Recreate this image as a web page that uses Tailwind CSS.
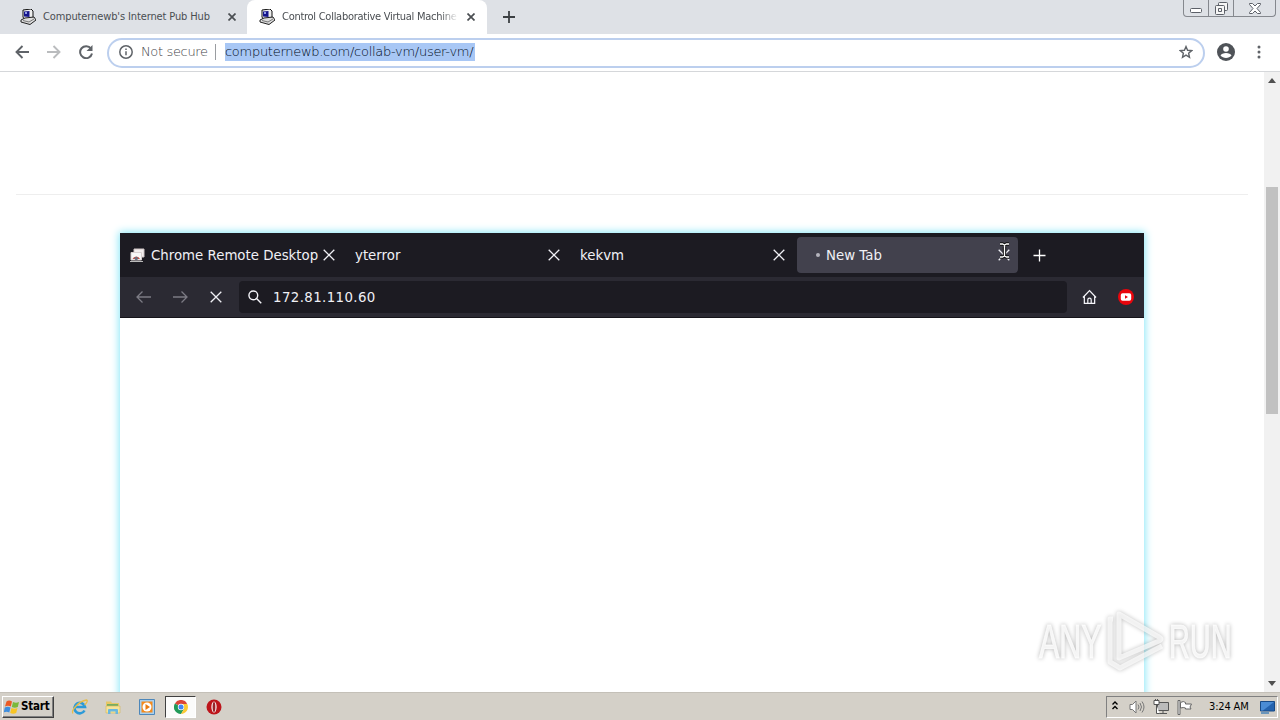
<!DOCTYPE html>
<html lang="en">
<head>
    <meta charset="utf-8">
    <title>Control Collaborative Virtual Machines</title>
    <meta name="viewport" content="width=device-width, initial-scale=1.0">
    <script src="https://cdn.jsdelivr.net/npm/@tailwindcss/browser@4"></script>
</head>

<body class="w-[1280px] h-[720px] overflow-hidden bg-white flex flex-col relative font-['DejaVu_Sans_Condensed','DejaVu_Sans',sans-serif]">
    <!-- Shared icons -->
    <svg class="hidden">
        <symbol id="pc" viewBox="0 0 16 16">
            <path d="M3 1 11 0l2 2v7l-2 2-7-1-1-2z" fill="#eee" stroke="#111"/>
            <path d="M4 2.500 9.500 2v6L4 7.500z" fill="#15158c"/>
            <path d="M5 3h2v2H5z" fill="#8f9ce8"/>
            <path d="m1 11 4-2 9-1 2 3-6 4.500L1 13z" fill="#ddd" stroke="#222"/>
            <path d="m3 11.500 6 1.500 5-3" fill="none" stroke="#777"/>
        </symbol>
        <symbol id="cross" viewBox="0 0 12 12">
            <path d="m.7.7 10.600 10.600M11.300.7.7 11.300" fill="none" stroke="currentColor" stroke-width="1.300"/>
        </symbol>
        <symbol id="close" viewBox="0 0 8 8">
            <path d="m.5.5 7 7M7.500.5l-7 7" fill="none" stroke="currentColor" stroke-width="1.700"/>
        </symbol>
    </svg>

    <!-- Tab strip -->
    <header class="h-[34px] shrink-0 bg-[#dee1e6] flex text-[11px] text-[#4a4e52]">
        <div class="w-[247px] flex items-center pl-5">
            <svg class="w-4 h-4 shrink-0"><use href="#pc"/></svg>
            <span class="ml-[7px] w-[185px] pt-px whitespace-nowrap tracking-[-0.12px]">Computernewb's Internet Pub Hub</span>
            <svg class="w-2 h-2 shrink-0"><use href="#close"/></svg>
        </div>
        <div class="w-[240px] flex items-center pl-3 bg-white rounded-t-lg">
            <svg class="w-4 h-4 shrink-0"><use href="#pc"/></svg>
            <span class="ml-[7px] w-[176px] mr-[9px] pt-px overflow-hidden whitespace-nowrap tracking-[-0.27px] mask-r-from-90%">Control Collaborative Virtual Machine</span>
            <svg class="w-2 h-2 shrink-0"><use href="#close"/></svg>
        </div>
        <div class="flex items-center pl-4">
            <svg class="w-3 h-3" viewBox="0 0 12 12"><path d="M6 0v12M0 6h12" stroke="#3c4043" stroke-width="1.800"/></svg>
        </div>
        <!-- Window controls -->
        <div class="ml-auto mr-[4px] h-[17px] w-[93px] flex border border-t-0 border-[#85888e] rounded-b-[4px]">
            <div class="w-[25px] border-r border-[#85888e] flex items-center justify-center pt-1">
                <svg class="w-[12px] h-[5px]" viewBox="0 0 12 5"><rect x=".5" y=".5" width="11" height="4" rx="1" fill="#fff" stroke="#5c6068"/></svg>
            </div>
            <div class="w-[25px] border-r border-[#85888e] flex items-center justify-center">
                <svg class="w-[13px] h-[13px]" viewBox="0 0 13 13" fill="#f6f6f6" stroke="#5c6068"><rect x="3.500" y=".5" width="9" height="8" rx="1"/><rect x=".5" y="3.500" width="9" height="9" rx="1"/><path d="M3.500 6.500h3v3h-3z"/></svg>
            </div>
            <div class="flex-1 flex items-center justify-center">
                <svg class="w-[12px] h-[11px]" viewBox="0 0 12 11"><path d="M.5.5h3L6 3 8.500.5h3v1L8 5.500l3.500 4v1h-3L6 8l-2.500 2.500h-3v-1L4 5.500l-3.500-4z" fill="#fff" stroke="#5c6068"/></svg>
            </div>
        </div>
    </header>

    <!-- Address bar -->
    <div class="h-[38px] shrink-0 flex items-center border-b border-[#d5d7da] pl-[15px]">
        <svg class="w-[14px] h-[14px] mb-px" viewBox="0 0 14 14" fill="none" stroke="#5f6368" stroke-width="1.900"><path d="M14 7H1.500M7.500 1l-6 6 6 6"/></svg>
        <svg class="w-[14px] h-[14px] ml-[18px] mb-px" viewBox="0 0 14 14" fill="none" stroke="#babcbe" stroke-width="1.900"><path d="M0 7h12.500M6.500 1l6 6-6 6"/></svg>
        <svg class="w-[14px] h-[14px] ml-[18px] mb-px" viewBox="0 0 14 14" fill="none" stroke="#5f6368" stroke-width="2"><path d="M12 3.600A6 6 0 1 0 13 8.500"/><path d="M13.500 0v6H7.500z" fill="#5f6368" stroke="none"/></svg>
        <div class="ml-[14px] w-[1098px] h-[30px] rounded-full border-2 border-[#bccfee] flex items-center pl-[10px] pb-[2px] font-['DejaVu_Sans','DejaVu_Sans_Light',sans-serif]">
            <svg class="w-[14px] h-[14px]" viewBox="0 0 14 14" fill="none" stroke="#5f6368" stroke-width="1.500"><circle cx="7" cy="7" r="6.200"/><path d="M7 6.200v4M7 3.500v1.500"/></svg>
            <span class="ml-[8px] w-[74px] whitespace-nowrap text-[#3f4348] text-[13px] font-extralight tracking-[-0.35px]">Not secure</span>
            <span class="w-px h-4 bg-[#9a9da1]"></span>
            <span class="ml-[9px] h-[18px] w-[250px] leading-[18px] bg-[#a8c7f5] text-[#000a20] whitespace-nowrap text-[13px] font-extralight tracking-[-0.28px]">computernewb.com/collab-vm/user-vm/</span>
            <svg class="w-[14px] h-[14px] ml-auto mr-[10px]" viewBox="0 0 16 16" fill="none" stroke="#5f6368" stroke-width="1.600"><path d="m8 1.800 1.800 4.200 4.700.4-3.500 3 1 4.700L8 11.600l-4 2.500 1-4.700-3.500-3 4.700-.4z"/></svg>
        </div>
        <svg class="w-[18px] h-[18px] ml-[12px] mb-px" viewBox="0 0 18 18"><circle cx="9" cy="9" r="9" fill="#4f5358"/><circle cx="9" cy="6" r="2.800" fill="#fff"/><path d="M3.500 12.500c1-3.500 10-3.500 11 0-2.500 3.300-8.500 3.300-11 0" fill="#fff"/></svg>
        <svg class="w-[4px] h-[14px] ml-[22px] mb-px" viewBox="0 0 4 14" fill="#5f6368"><circle cx="2" cy="2" r="1.500"/><circle cx="2" cy="7" r="1.500"/><circle cx="2" cy="12" r="1.500"/></svg>
    </div>

    <!-- Page -->
    <main class="h-[620px] shrink-0 flex overflow-hidden">
        <div class="flex-1 px-4 pt-[122px] overflow-hidden">
            <div class="border-t border-[#eee] w-[1232px]"></div>
            <!-- Remote display -->
            <div class="mt-[38px] ml-[104px] w-[1024px] h-[500px] shadow-[0_0_8px_1px_#86e6f7] bg-white font-['DejaVu_Sans',sans-serif] text-[#f0f0f5] text-[13.330px]">
                <div class="h-[44px] bg-[#1c1b22] flex items-center">
                    <div class="w-[225px] flex items-center pl-[10px]">
                        <svg class="w-[15px] h-[14px] shrink-0" viewBox="0 0 15 14"><path d="M4 1h10v8H4z" fill="#f4efef" stroke="#cfc6c6"/><path d="M1 4.500h10.500V12H1z" fill="#f8f8f8" stroke="#d8d0d0"/><path d="M2.500 11a4 4 0 0 1 7.500 0z" fill="#c4524a"/><circle cx="6.300" cy="10.500" r="1.700" fill="#6b7280"/><path d="M0 13.500h13" stroke="#bbb"/></svg>
                        <span class="ml-[6px] w-[172px] pt-[2px] whitespace-nowrap">Chrome Remote Desktop</span>
                        <svg class="w-3 h-3 shrink-0"><use href="#cross"/></svg>
                    </div>
                    <div class="w-[225px] flex items-center pl-[10px]">
                        <span class="w-[193px] pt-[2px]">yterror</span>
                        <svg class="w-3 h-3 shrink-0"><use href="#cross"/></svg>
                    </div>
                    <div class="w-[227px] flex items-center pl-[10px]">
                        <span class="w-[193px] pt-[2px]">kekvm</span>
                        <svg class="w-3 h-3 shrink-0"><use href="#cross"/></svg>
                    </div>
                    <div class="w-[221px] h-[36px] rounded-[4px] bg-[#42414d] flex items-center pl-[19px] relative">
                        <span class="w-[4px] h-[4px] rounded-full bg-[#b5b4bd]"></span>
                        <span class="ml-[6px] w-[172px] pt-[2px]">New Tab</span>
                        <svg class="w-3 h-3 shrink-0"><use href="#cross"/></svg>
                        <!-- Text cursor over the close button -->
                        <svg class="absolute left-[202px] top-[5px] w-[11px] h-[17px]" viewBox="0 0 11 17" fill="none"><path d="M1 2h2.500l2 1 2-1H10M1 15h2.500l2-1 2 1H10M5.500 3v11" stroke="#111" stroke-width="3.400"/><path d="M1 2h2.500l2 1 2-1H10M1 15h2.500l2-1 2 1H10M5.500 3v11" stroke="#fff" stroke-width="1.300"/></svg>
                    </div>
                    <svg class="ml-[15px] w-[13px] h-[13px]" viewBox="0 0 13 13"><path d="M6.500.5v12M.5 6.500h12" stroke="#fff" stroke-width="1.300"/></svg>
                </div>
                <div class="h-[41px] bg-[#2b2a33] border-b border-[#15141a] flex items-center pl-[16px]">
                    <svg class="w-[15px] h-[12px]" viewBox="0 0 15 12" fill="none" stroke="#7c7b84" stroke-width="1.300"><path d="M15 6H1M6.500.5 1 6l5.500 5.500"/></svg>
                    <svg class="w-[15px] h-[12px] ml-[22px]" viewBox="0 0 15 12" fill="none" stroke="#7c7b84" stroke-width="1.300"><path d="M0 6h14M8.500.5 14 6l-5.500 5.500"/></svg>
                    <svg class="w-3 h-3 ml-[22px]"><use href="#cross"/></svg>
                    <div class="ml-[17px] w-[828px] h-[32px] rounded-[4px] bg-[#1c1b22] flex items-center pl-[9px]">
                        <svg class="w-[14px] h-[14px]" viewBox="0 0 15 15" fill="none" stroke="#f5f5fa" stroke-width="1.500"><circle cx="5.700" cy="5.700" r="4.700"/><path d="m9.200 9.200 5 5"/></svg>
                        <span class="ml-[11px] pt-[2px] tracking-[0.4px]">172.81.110.60</span>
                    </div>
                    <svg class="w-[15px] h-[16px] ml-[15px]" viewBox="0 0 16 16" fill="none" stroke="#f5f5fa" stroke-width="1.300"><path d="M1 8.500 8 1.200l7 7.300M2.500 7.500v7.300h11V7.500M6.200 14.500V11a1.800 1.800 0 0 1 3.600 0v3.500"/></svg>
                    <svg class="w-[16px] h-[16px] ml-[21px]" viewBox="0 0 16 16"><circle cx="8" cy="8" r="8" fill="#e8050c"/><rect x="2.800" y="4.300" width="10.400" height="7.400" rx="1.800" fill="#fff"/><path d="m7 6.300 3 1.700-3 1.700z" fill="#e8050c"/></svg>
                </div>
            </div>
        </div>
        <!-- Scrollbar -->
        <div class="w-4 bg-[#f1f1f1] flex flex-col items-center">
            <svg class="w-2 h-[5px] mt-[6px]" viewBox="0 0 8 5"><path d="m0 5 4-5 4 5z" fill="#505050"/></svg>
            <div class="mt-[104px] w-[12px] h-[227px] bg-[#c1c1c1]"></div>
            <svg class="w-2 h-[5px] mt-auto mb-[6px]" viewBox="0 0 8 5"><path d="m0 0 4 5 4-5z" fill="#505050"/></svg>
        </div>
    </main>

    <!-- Watermark -->
    <svg class="absolute left-[1030px] top-[601px] w-[212px] h-[76px] drop-shadow-[0_0_2px_rgba(0,0,0,0.35)]" viewBox="0 0 212 76" font-family="Liberation Sans Narrow, Liberation Sans, sans-serif" font-size="48" fill="#fff" fill-opacity=".8" stroke="#fff" stroke-opacity=".7">
        <text transform="translate(9 57) scale(.68 1)" textLength="92" lengthAdjust="spacingAndGlyphs">ANY</text>
        <text transform="translate(139 57) scale(.68 1)" textLength="92" lengthAdjust="spacingAndGlyphs">RUN</text>
        <g fill="none" stroke-width="5" stroke-linejoin="round"><path d="M89 13v44l40-17q4-2 0-4z"/><path d="M83 18h-3v43l10 6 42-22"/></g>
    </svg>

    <!-- Taskbar -->
    <footer class="h-[28px] shrink-0 bg-[#d4d0c8] border-t border-[#c4c0b8] flex items-center pt-px text-[11px] text-black">
        <div class="ml-[2px] w-[52px] h-[22px] border border-t-white border-l-white border-r-[#404040] border-b-[#404040] shadow-[inset_-1px_-1px_0_#808080] flex items-center pl-[1px]">
            <svg class="w-[16px] h-[16px] shrink-0" viewBox="0 0 16 16"><path d="M2.500 2.500Q5 .5 8 2.500L6.800 7.500Q4 5.800 1 7.500z" fill="#ec5a24"/><path d="M9 3q3 1.500 6 0l-1.200 5q-3 1.500-6 0z" fill="#7ab93b"/><path d="M.8 8.500q3-1.700 5.700 0L5.300 13.500Q2.500 12-.3 13.500z" fill="#3f8ede"/><path d="M7.500 9q3 1.500 6 0l-1.300 5q-3 1.500-6 0z" fill="#f8c524"/></svg>
            <span class="font-bold ml-[1px] text-[11.500px] tracking-[-0.2px]">Start</span>
        </div>
        <svg class="w-[17px] h-[16px] ml-[17px]" viewBox="0 0 17 16" fill="none"><path d="M13.500 11.500A5.300 5.300 0 1 1 14 8H5" stroke="#2c9ad8" stroke-width="2.600"/><path d="M2 14.500C-1 12 8 2 15.500 1c2 .5-.5 4-2 5" stroke="#e8bd45" stroke-width="1.300"/></svg>
        <svg class="w-[16px] h-[16px] ml-[17px]" viewBox="0 0 16 16"><path d="M1 2.500h5l1 1.500h7v10H1z" fill="#e7c765"/><path d="M2 5h11v3H2z" fill="#77ad62"/><path d="M1 7h14v7H1z" fill="#f6e398" stroke="#d5b659" stroke-width=".6"/><path d="M3 15v-4q0-1 1-1h8q1 0 1 1v4h-2.500v-2.500h-5V15z" fill="#69b7df"/></svg>
        <svg class="w-[16px] h-[16px] ml-[18px]" viewBox="0 0 16 16"><path d="M.5.500h15v15H.5z" fill="#a8d0ef" stroke="#4d87ba"/><path d="M2.500 2.500h11v11h-11z" fill="#f48a1c"/><circle cx="8" cy="8" r="4.500" fill="#fff"/><path d="m6.500 5 4.500 3-4.500 3z" fill="#e97b12"/></svg>
        <div class="ml-[10px] w-[31px] h-[22px] bg-[#fbfbfa] border border-t-[#404040] border-l-[#404040] border-r-white border-b-white flex items-center justify-center">
            <svg class="w-[14px] h-[14px]" viewBox="0 0 14 14"><path d="M7 7 .9 3.500a7 7 0 0 1 12.200 0z" fill="#dc4437"/><path d="M7 7 .9 3.500A7 7 0 0 0 7 14l3-5z" fill="#219a58"/><path d="M7 4h6.300A7 7 0 0 1 7 14l3-5z" fill="#fbc934"/><circle cx="7" cy="7" r="3.200" fill="#fff"/><circle cx="7" cy="7" r="2.500" fill="#4285f4"/></svg>
        </div>
        <svg class="w-[16px] h-[16px] ml-[10px]" viewBox="0 0 16 16"><circle cx="8" cy="8" r="7.500" fill="#bd151b"/><ellipse cx="8" cy="8" rx="2.600" ry="5.500" fill="#fff"/><ellipse cx="8" cy="8" rx="1.400" ry="5" fill="#99242a"/></svg>
        <!-- Notification area -->
        <div class="ml-auto mr-[2px] w-[172px] h-[22px] border border-t-[#808080] border-l-[#808080] border-r-white border-b-white flex items-center pl-[5px]">
            <svg class="w-[6px] h-[9px] mb-1" viewBox="0 0 6 9" fill="none" stroke="#000" stroke-width="1.400"><path d="m.5 3.500 2.500-2.500 2.500 2.500M.5 8l2.500-2.500L5.500 8"/></svg>
            <svg class="w-[16px] h-[14px] ml-[11px]" viewBox="0 0 16 14" fill="none" stroke="#777"><path d="M1 4.500h2.500L7 1v12L3.500 9.500H1z" fill="#fff"/><path d="M9 4.500q2 2.500 0 5M11 3q3 4 0 8M13 1.500q4 5.500 0 11"/></svg>
            <svg class="w-[16px] h-[16px] ml-[8px]" viewBox="0 0 16 16" stroke="#555"><path d="M4.500 3.500h11v8h-11z" fill="#bbb"/><path d="M6 14.500h8M10 12v2" fill="none"/><path d="M1 1.500h5v4H1zM3.500 5.500v9h3" fill="#fff"/><path d="M2.500 0v2M4.500 0v2"/></svg>
            <svg class="w-[16px] h-[15px] ml-[8px]" viewBox="0 0 16 15" stroke="#666"><path d="M1 .5h2v14H1z" fill="#eee"/><path d="M3.500 2.500q3-2 5 0v1.500h6L13 7l1 2H8.500V8q-2-1-5 0z" fill="#fff"/></svg>
            <span class="ml-[16px] w-[43px] pt-px whitespace-nowrap tracking-[-0.15px]">3:24 AM</span>
            <svg class="w-[15px] h-[13px] ml-[8px]" viewBox="0 0 15 13"><path d="M.5.5h14v9.500H.5z" fill="#2463ae" stroke="#174a86"/><path d="M1 1h13L3 9.500H1z" fill="#4a8cd4"/><path d="M1 12h8" stroke="#4883b7" stroke-width="1.500"/></svg>
        </div>
    </footer>
</body>
</html>
